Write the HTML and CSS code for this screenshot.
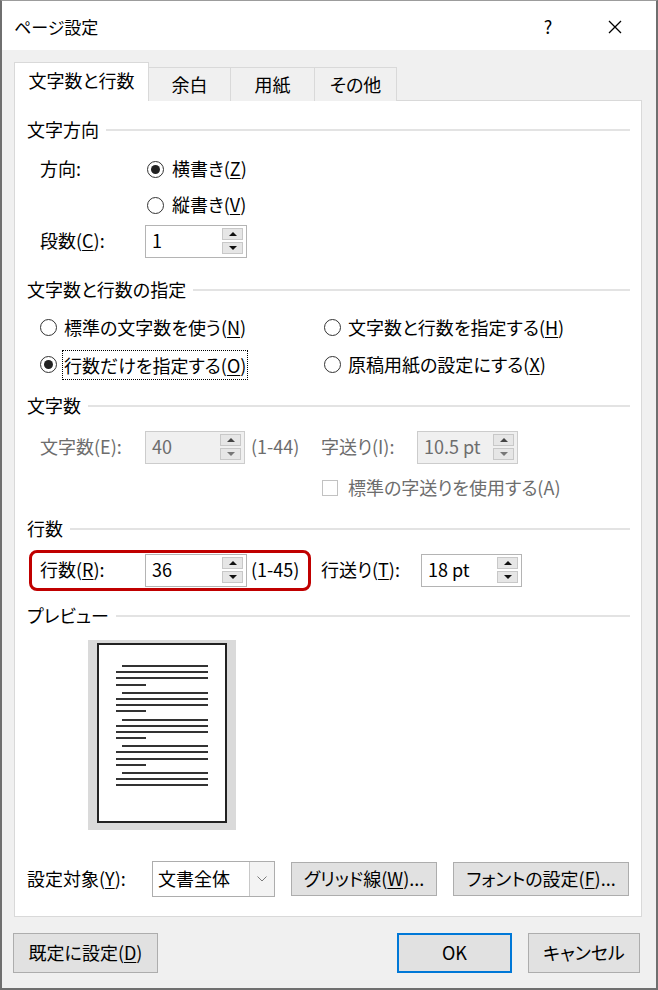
FILE: index.html
```html
<!DOCTYPE html>
<html lang="ja">
<head>
    <meta charset="UTF-8">
    <title>ページ設定</title>
    <link rel="stylesheet" href="styles.css">
</head>
<body>
    <div class="dialog">
        <div class="titlebar">
            <span class="title">ページ設定</span>
            <span class="help">?</span>
            <span class="close">
                <svg width="14" height="14" viewBox="0 0 14 14"><path d="M1 1 L13 13 M13 1 L1 13" stroke="#000" stroke-width="1.3" fill="none"/></svg>
            </span>
        </div>

        <div class="client">
            <div class="tabs">
                <div class="tab active">文字数と行数</div>
                <div class="tab t-margin">余白</div>
                <div class="tab t-paper">用紙</div>
                <div class="tab t-other">その他</div>
            </div>

            <div class="panel">
                <!-- 文字方向 -->
                <div class="group">
                    <div class="group-title">文字方向</div>
                    <div class="rows g-dir">
                        <div class="row">
                            <span class="label">方向:</span>
                            <span class="radio checked dir"><i></i>横書き(<u>Z</u>)</span>
                        </div>
                        <div class="row">
                            <span class="label"></span>
                            <span class="radio dir"><i></i>縦書き(<u>V</u>)</span>
                        </div>
                        <div class="row">
                            <span class="label">段数(<u>C</u>):</span>
                            <div class="spin w-col">
                                <span class="val">1</span>
                                <span class="arrows"><b class="up"></b><b class="down"></b></span>
                            </div>
                        </div>
                    </div>
                </div>

                <!-- 文字数と行数の指定 -->
                <div class="group g2">
                    <div class="group-title">文字数と行数の指定</div>
                    <div class="rows g-spec">
                        <div class="row tall">
                            <span class="radio col1"><i></i>標準の文字数を使う(<u>N</u>)</span>
                            <span class="radio"><i></i>文字数と行数を指定する(<u>H</u>)</span>
                        </div>
                        <div class="row tall">
                            <span class="radio checked col1"><i></i><span class="focus">行数だけを指定する(<u>O</u>)</span></span>
                            <span class="radio"><i></i>原稿用紙の設定にする(<u>X</u>)</span>
                        </div>
                    </div>
                </div>

                <!-- 文字数 -->
                <div class="group g3">
                    <div class="group-title">文字数</div>
                    <div class="rows g-chars">
                        <div class="row dim">
                            <span class="label">文字数(E):</span>
                            <div class="spin disabled w-chars">
                                <span class="val">40</span>
                                <span class="arrows"><b class="up"></b><b class="down"></b></span>
                            </div>
                            <span class="range">(1-44)</span>
                            <span class="label2 l-pitch">字送り(I):</span>
                            <div class="spin disabled w-pitch">
                                <span class="val">10.5 pt</span>
                                <span class="arrows"><b class="up"></b><b class="down"></b></span>
                            </div>
                        </div>
                        <div class="row dim check-row">
                            <span class="check"></span>標準の字送りを使用する(A)
                        </div>
                    </div>
                </div>

                <!-- 行数 -->
                <div class="group g4">
                    <div class="group-title">行数</div>
                    <div class="rows g-lines">
                        <div class="row lines-row">
                            <div class="highlight">
                                <span class="label">行数(<u>R</u>):</span>
                                <div class="spin w-lines">
                                    <span class="val">36</span>
                                    <span class="arrows"><b class="up"></b><b class="down"></b></span>
                                </div>
                                <span class="range">(1-45)</span>
                            </div>
                            <span class="label2 l-lead">行送り(<u>T</u>):</span>
                            <div class="spin w-lead">
                                <span class="val">18 pt</span>
                                <span class="arrows"><b class="up"></b><b class="down"></b></span>
                            </div>
                        </div>
                    </div>
                </div>

                <!-- プレビュー -->
                <div class="group g5">
                    <div class="group-title">プレビュー</div>
                    <div class="preview">
                        <div class="page">
                            <div class="para"><div class="ln first"></div><div class="ln"></div><div class="ln"></div><div class="ln short"></div></div>
                            <div class="para"><div class="ln first"></div><div class="ln"></div><div class="ln"></div><div class="ln short"></div></div>
                            <div class="para"><div class="ln first"></div><div class="ln"></div><div class="ln"></div><div class="ln short"></div></div>
                            <div class="para"><div class="ln first"></div><div class="ln"></div><div class="ln"></div><div class="ln short"></div></div>
                            <div class="para"><div class="ln first"></div><div class="ln"></div><div class="ln"></div></div>
                        </div>
                    </div>
                </div>

                <div class="apply-row">
                    <span class="apply-label">設定対象(<u>Y</u>):</span>
                    <div class="select">
                        <span class="val">文書全体</span>
                        <span class="drop">
                            <svg width="10" height="6" viewBox="0 0 10 6"><path d="M0.5 0.5 L5 5 L9.5 0.5" stroke="#7a7a7a" stroke-width="1" fill="none"/></svg>
                        </span>
                    </div>
                    <button class="btn btn-grid">グリッド線(<u>W</u>)...</button>
                    <button class="btn btn-font">フォントの設定(<u>F</u>)...</button>
                </div>
            </div>

            <div class="footer">
                <button class="btn btn-default">既定に設定(<u>D</u>)</button>
                <button class="btn btn-ok">OK</button>
                <button class="btn btn-cancel">キャンセル</button>
            </div>
        </div>
    </div>
</body>
</html>
```

FILE: styles.css
```css
* {
    margin: 0;
    padding: 0;
    box-sizing: border-box;
}
body {
    background: #fff;
    font-family: "Noto Sans CJK JP", "Noto Sans", sans-serif;
    font-size: 18px;
    line-height: 1.4;
    color: #000;
    font-feature-settings: "palt";
}
u {
    text-underline-offset: 2px;
}
.dialog {
    width: 658px;
    height: 990px;
    border: 2px solid #6f6f6f;
    border-top: 1px solid #9c9c9c;
    background: #f0f0f0;
    display: flex;
    flex-direction: column;
}
.titlebar {
    height: 49px;
    background: #fff;
    display: flex;
    align-items: center;
    padding: 2px 18px 0 12px;
}
.title {
    flex: 1;
    font-size: 17px;
}
.help {
    width: 46px;
    text-align: center;
    font-size: 18px;
    margin-right: 21px;
}
.close {
    width: 46px;
    display: flex;
    justify-content: center;
}
.client {
    padding: 0 14px 0 12px;
}
.tabs {
    margin-top: 13px;
    height: 38px;
    display: flex;
    align-items: flex-end;
    margin-bottom: -1px;
    position: relative;
    z-index: 1;
}
.tab {
    height: 34px;
    border: 1px solid #d9d9d9;
    border-bottom: none;
    background: #f0f0f0;
    display: flex;
    align-items: center;
    justify-content: center;
    margin-left: -1px;
}
.tab.active {
    height: 39px;
    width: 135px;
    background: #fff;
    margin-left: 0;
    padding-bottom: 3px;
}
.t-margin { width: 83px; }
.t-paper { width: 85px; }
.t-other { width: 83px; }

.panel {
    height: 817px;
    background: #fff;
    border: 1px solid #d9d9d9;
    padding: 17px 11px 0 12px;
}
.group-title {
    height: 24px;
    display: flex;
    align-items: center;
}
.group-title::after {
    content: "";
    flex: 1;
    height: 2px;
    background: #e3e3e3;
    margin-left: 7px;
}
.g2 { margin-top: 19px; }
.g3 { margin-top: 11px; }
.g4 { margin-top: 11px; }
.g5 { margin-top: 13px; }

.g-dir { margin-top: 9px; }
.g-spec { margin-top: 7px; }
.g-chars { margin-top: 11px; }
.g-lines { margin-top: 8px; }

.row {
    height: 36px;
    display: flex;
    align-items: center;
    padding-left: 13px;
}
.row.tall {
    height: 37px;
}
.label {
    width: 105px;
    flex-shrink: 0;
}
.label2 {
    flex-shrink: 0;
}
.l-pitch { width: 96px; }
.l-lead { width: 100px; }

.radio {
    display: flex;
    align-items: center;
}
.radio i {
    width: 17px;
    height: 17px;
    border: 1px solid #333;
    border-radius: 50%;
    margin-right: 7px;
    display: flex;
    align-items: center;
    justify-content: center;
    flex-shrink: 0;
}
.radio.checked i::after {
    content: "";
    width: 9px;
    height: 9px;
    border-radius: 50%;
    background: #222;
}
.radio.dir {
    margin-left: 2px;
}
.radio.dir i {
    margin-right: 8px;
}
.col1 {
    width: 284px;
}
.focus {
    outline: 1px dotted #000;
    outline-offset: 0;
    line-height: 28px;
    padding: 0 1px;
    margin-left: -1px;
}

.spin {
    height: 33px;
    border: 1px solid #b4b4b4;
    background: #fff;
    display: flex;
    align-items: center;
    flex-shrink: 0;
}
.spin .val {
    flex: 1;
    padding-left: 6px;
}
.arrows {
    width: 21px;
    margin-right: 3px;
    display: flex;
    flex-direction: column;
    gap: 2px;
}
.arrows b {
    height: 12px;
    background: #e6e6e6;
    border: 1px solid #c8c8c8;
    display: flex;
    align-items: center;
    justify-content: center;
}
.arrows b::after {
    content: "";
    border-left: 4px solid transparent;
    border-right: 4px solid transparent;
}
.arrows .up::after {
    border-bottom: 4px solid #111;
}
.arrows .down::after {
    border-top: 4px solid #111;
}
.spin.disabled {
    background: #f0f0f0;
    border-color: #cccccc;
}
.spin.disabled .val {
    color: #6d6d6d;
}
.spin.disabled .arrows .up::after {
    border-bottom-color: #444;
}
.spin.disabled .arrows .down::after {
    border-top-color: #777;
}
.w-col { width: 102px; }
.w-chars { width: 100px; }
.w-pitch { width: 101px; }
.w-lines { width: 102px; }
.w-lead { width: 101px; }

.range {
    margin-left: 6px;
    width: 70px;
    flex-shrink: 0;
}
.dim {
    color: #6d6d6d;
}
.check-row {
    margin-top: 5px;
    padding-left: 295px;
}
.check {
    width: 16px;
    height: 16px;
    border: 1px solid #c2c2c2;
    margin-right: 10px;
}

.lines-row {
    height: 42px;
    padding-left: 2px;
}
.highlight {
    height: 41px;
    width: 282px;
    border: 3px solid #c00000;
    border-radius: 8px;
    padding-left: 8px;
    display: flex;
    align-items: center;
    margin-right: 10px;
}
.highlight .range {
    margin-left: 4px;
    width: 57px;
}

.preview {
    margin: 12px 0 0 61px;
    width: 148px;
    height: 190px;
    background: #dadada;
    padding: 3px 0 0 9px;
}
.page {
    width: 130px;
    height: 180px;
    background: #fff;
    border: 2px solid #222;
    padding: 20px 0 0 17px;
}
.para {
    margin-bottom: 6.2px;
}
.ln {
    width: 92px;
    height: 2px;
    background: #333;
    margin-bottom: 4.2px;
}
.ln.first {
    width: 86px;
    margin-left: 6px;
}
.ln.short {
    width: 30px;
}

.apply-row {
    margin-top: 31px;
    height: 36px;
    display: flex;
    align-items: center;
}
.apply-label {
    width: 125px;
    flex-shrink: 0;
}
.select {
    width: 123px;
    height: 36px;
    border: 1px solid #adadad;
    background: #fff;
    display: flex;
    align-items: stretch;
}
.select .val {
    flex: 1;
    padding-left: 5px;
    display: flex;
    align-items: center;
}
.select .drop {
    width: 25px;
    border-left: 1px solid #c8c8c8;
    background: #f3f3f3;
    display: flex;
    align-items: center;
    justify-content: center;
}
.btn {
    font: inherit;
    color: #000;
    background: #e1e1e1;
    border: 1px solid #adadad;
    height: 34px;
    display: flex;
    align-items: center;
    justify-content: center;
}
.btn-grid {
    width: 146px;
    margin-left: 16px;
}
.btn-font {
    width: 176px;
    margin-left: 16px;
}

.footer {
    margin-top: 16px;
    height: 40px;
    display: flex;
}
.footer .btn {
    height: 40px;
}
.btn-default {
    width: 145px;
    margin-left: -1px;
    margin-right: auto;
}
.btn-ok {
    width: 115px;
    border: 2px solid #0078d7;
}
.btn-cancel {
    width: 112px;
    margin-left: 16px;
    margin-right: 2px;
}
```
